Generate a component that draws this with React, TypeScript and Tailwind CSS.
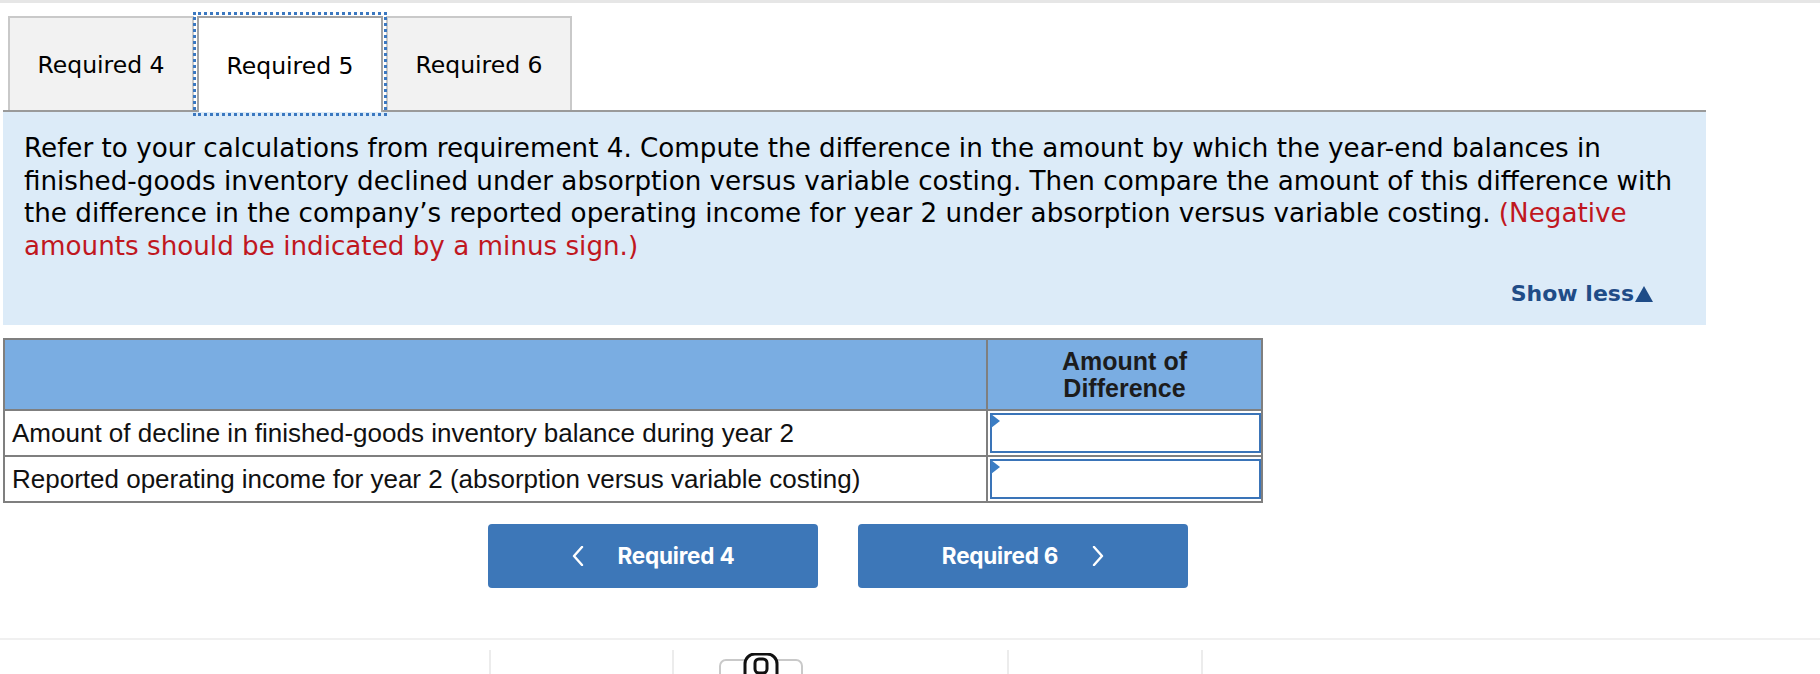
import React from "react";

const verdana = "font-['DejaVu_Sans',Verdana,sans-serif]";
const arial = "font-['Liberation_Sans',Arial,Helvetica,sans-serif]";

function ChevronLeft() {
  return (
    <svg width="12" height="20" viewBox="0 0 12 20" fill="none">
      <polyline points="10,1 2,10 10,19" stroke="white" strokeWidth="2.4" strokeLinecap="round" strokeLinejoin="round" />
    </svg>
  );
}
function ChevronRight() {
  return (
    <svg width="12" height="20" viewBox="0 0 12 20" fill="none">
      <polyline points="2,1 10,10 2,19" stroke="white" strokeWidth="2.4" strokeLinecap="round" strokeLinejoin="round" />
    </svg>
  );
}

function Tab({ label, active }: { label: string; active?: boolean }) {
  if (active) {
    return (
      <div
        className={`relative z-10 -mb-[2px] flex h-[96px] w-[186px] items-center justify-center border-2 border-b-0 border-[#a3a3a3] bg-white pt-[3px] text-[23.5px] text-black outline-[3px] outline-dotted outline-offset-[1px] outline-[#3b78c0] ${verdana}`}
      >
        {label}
      </div>
    );
  }
  return (
    <div
      className={`flex h-[94px] w-[186px] items-center justify-center border-2 border-b-0 border-[#c9c9c9] bg-[#f2f2f2] pt-[4px] text-[23.5px] text-black ${verdana}`}
    >
      {label}
    </div>
  );
}

function InputCell() {
  return (
    <div className="relative h-full w-full pl-[2px] pt-[2px] pb-[2px]">
      <div className="h-full w-full border-2 border-[#3a74b8] bg-white" />
      <svg className="absolute left-[3px] top-[3px]" width="10" height="14" viewBox="0 0 10 14">
        <polygon points="0,0 9,7 0,14" fill="#3b7dc4" />
      </svg>
    </div>
  );
}

export default function App() {
  return (
    <div className="flex h-[674px] w-[1820px] flex-col overflow-hidden bg-white">
      <div className="h-[3px] w-full bg-[#e6e6e6]" />

      {/* Tabs */}
      <div className="mt-[13px] flex items-end gap-[3px] pl-[8px]">
        <Tab label="Required 4" />
        <Tab label="Required 5" active />
        <Tab label="Required 6" />
      </div>

      {/* Instruction panel */}
      <div className={`ml-[3px] box-border h-[215px] w-[1703px] border-t-2 border-[#9a9a9a] bg-[#dcebf8] ${verdana}`}>
        <div className="whitespace-nowrap pl-[21px] pt-[20px] text-[26.2px] leading-[32.5px] text-black">
          Refer to your calculations from requirement 4. Compute the difference in the amount by which the year-end balances in
          <br />
          finished-goods inventory declined under absorption versus variable costing. Then compare the amount of this difference with
          <br />
          the difference in the company’s reported operating income for year 2 under absorption versus variable costing.{" "}
          <span className="text-[#c0171f]">(Negative</span>
          <br />
          <span className="text-[#c0171f]">amounts should be indicated by a minus sign.)</span>
        </div>
        <div className="mt-[19px] flex justify-end pr-[53px]">
          <span className="flex items-end text-[22px] font-bold leading-[26px] text-[#1f4c87]">
            Show less
            <svg className="mb-[5px] ml-[1px]" width="18" height="16" viewBox="0 0 18 16">
              <polygon points="9,0 18,16 0,16" fill="#1f4c87" />
            </svg>
          </span>
        </div>
      </div>

      {/* Table */}
      <div className={`ml-[3px] mt-[13px] w-[1260px] border-2 border-[#7f7f7f] ${arial}`}>
        <div className="flex h-[69px] bg-[#7aade2]">
          <div className="w-[983px] border-r-2 border-[#7f7f7f]" />
          <div className="flex flex-1 items-center justify-center text-center text-[25px] font-bold leading-[27px] text-[#1c1c1c]">
            Amount of
            <br />
            Difference
          </div>
        </div>
        <div className="flex h-[46px] border-t-2 border-[#7f7f7f]">
          <div className="flex w-[983px] items-center border-r-2 border-[#7f7f7f] bg-white pl-[7px] text-[26px] text-[#111]">
            Amount of decline in finished-goods inventory balance during year 2
          </div>
          <div className="flex-1">
            <InputCell />
          </div>
        </div>
        <div className="flex h-[46px] border-t-2 border-[#7f7f7f]">
          <div className="flex w-[983px] items-center border-r-2 border-[#7f7f7f] bg-white pl-[7px] text-[26px] text-[#111]">
            Reported operating income for year 2 (absorption versus variable costing)
          </div>
          <div className="flex-1">
            <InputCell />
          </div>
        </div>
      </div>

      {/* Nav buttons */}
      <div className="ml-[488px] mt-[21px] flex gap-[40px] font-['Inter',Roboto,sans-serif]">
        <div className="flex h-[64px] w-[330px] items-center justify-center gap-[34px] rounded-[4px] bg-[#3d77b8] text-[22.5px] font-bold tracking-[-0.2px] text-white">
          <ChevronLeft />
          <span>Required 4</span>
        </div>
        <div className="flex h-[64px] w-[330px] items-center justify-center gap-[34px] rounded-[4px] bg-[#3d77b8] text-[22.5px] font-bold tracking-[-0.2px] text-white">
          <span>Required 6</span>
          <ChevronRight />
        </div>
      </div>

      {/* Bottom bar */}
      <div className="mt-[50px] h-[2px] w-full bg-[#f0f0f0]" />
      <div className="flex flex-1 pt-[10px]">
        <div className="ml-[489px] w-[2px] bg-[#ececec]" />
        <div className="relative w-[181px]">
          <svg className="absolute left-[228px] top-[3px]" width="84" height="30" viewBox="0 0 84 30" fill="none">
            <rect x="1" y="7" width="82" height="24" rx="6" stroke="#c9c9c9" strokeWidth="2" fill="white" />
            <rect x="26" y="1" width="32" height="30" rx="10" fill="white" stroke="#111" strokeWidth="3" />
            <rect x="36" y="6" width="12" height="14" rx="4" stroke="#111" strokeWidth="3" fill="none" />
          </svg>
        </div>
        <div className="w-[2px] bg-[#ececec]" />
        <div className="w-[333px]" />
        <div className="w-[2px] bg-[#ececec]" />
        <div className="w-[192px]" />
        <div className="w-[2px] bg-[#ececec]" />
      </div>
    </div>
  );
}
